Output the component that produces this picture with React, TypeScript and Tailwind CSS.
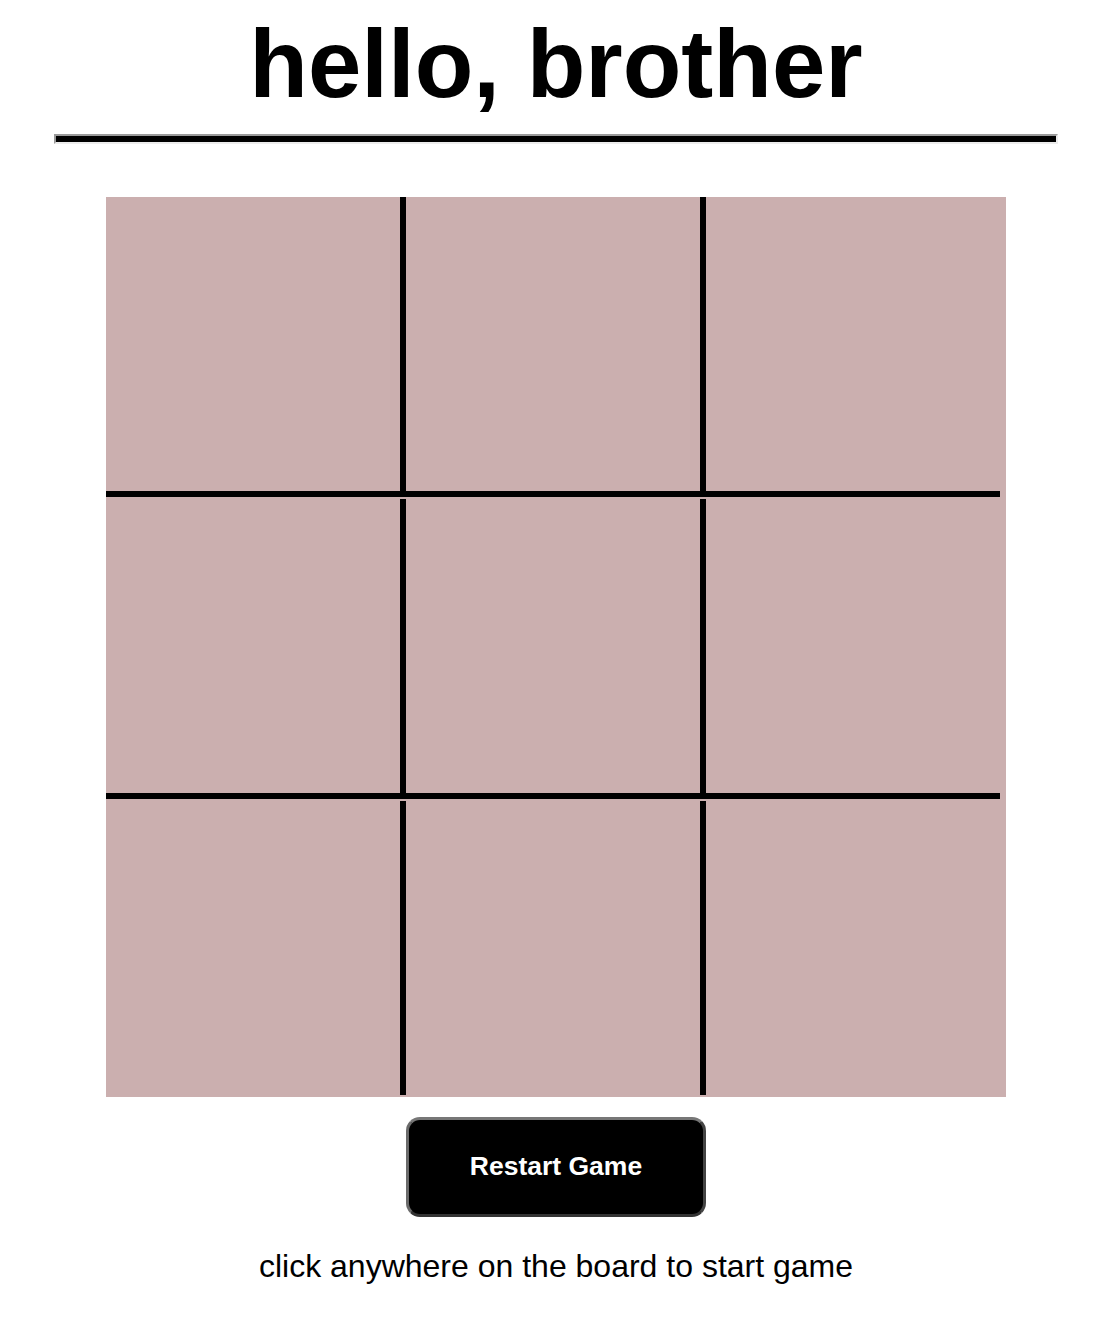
import React from "react";

const font = { fontFamily: '"Liberation Sans", Arial, Helvetica, sans-serif' };

function Row({ last }: { last?: boolean }) {
  const h = last ? "h-[294px]" : "h-[300px]";
  const b = last ? "" : "border-b-[6px]";
  return (
    <div className={`flex ${h}`}>
      <div className={`w-[300px] h-full border-r-[6px] border-black ${b}`} />
      <div className={`w-[300px] h-full border-r-[6px] border-black ${b}`} />
      <div className={`w-[294px] h-full border-black ${b}`} />
    </div>
  );
}

export default function App() {
  return (
    <div className="w-full bg-white pl-[4px] flex flex-col items-center text-black" style={font}>
      <h1 className="pt-[9px] text-[96px] leading-[110px] font-bold whitespace-nowrap">hello, brother</h1>
      <div className="mt-[15px] w-[1004px] h-[10px] bg-black border-t-2 border-l-2 border-t-[#9a9a9a] border-l-[#9a9a9a] border-b-2 border-r-2 border-b-[#ececec] border-r-[#ececec]" />
      <div className="mt-[53px] w-[900px] h-[900px] bg-[#cbafaf] flex flex-col gap-[2px]">
        <Row />
        <Row />
        <Row last />
      </div>
      <button className="mt-[20px] w-[300px] h-[100px] bg-black text-white font-bold text-[26.5px] rounded-[14px] border-[3px] border-t-[#777777] border-l-[#6a6a6a] border-r-[#444444] border-b-[#333333]">
        Restart Game
      </button>
      <p className="mt-[31px] text-[32px] leading-[37px] whitespace-nowrap pb-[40px]">
        click anywhere on the board to start game
      </p>
    </div>
  );
}
